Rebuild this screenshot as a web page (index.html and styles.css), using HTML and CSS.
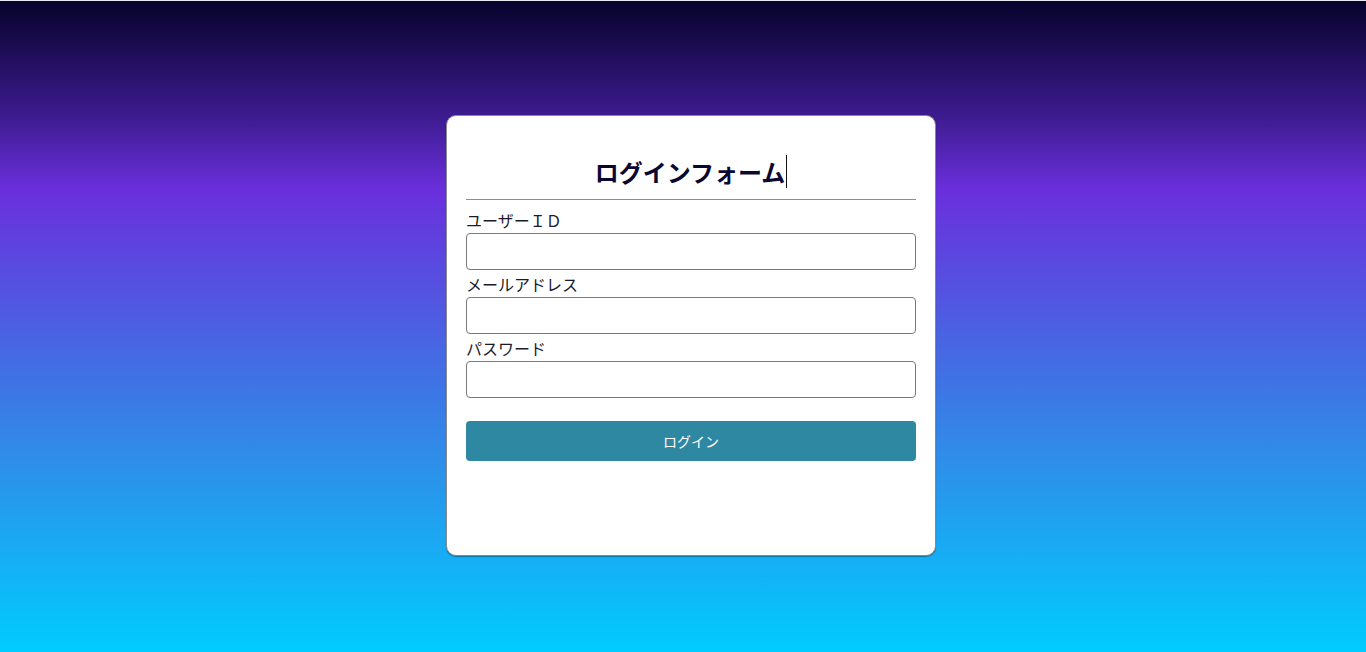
FILE: index.html
```html
<!DOCTYPE html>
<html lang="ja">
<head>
<meta charset="utf-8">
<title>ログインフォーム</title>
<link rel="stylesheet" href="styles.css">
</head>
<body>
<main class="card">
  <h1 class="title"><span class="typed">ログインフォーム</span></h1>
  <hr class="rule">
  <form class="form">
    <label class="label first" for="uid">ユーザーＩＤ</label>
    <input class="input" id="uid" type="text">
    <label class="label" for="mail">メールアドレス</label>
    <input class="input" id="mail" type="email">
    <label class="label" for="pw">パスワード</label>
    <input class="input" id="pw" type="password">
    <button class="button" type="button">ログイン</button>
  </form>
</main>
</body>
</html>
```
FILE: styles.css
```css
html, body {
  margin: 0;
  padding: 0;
}
body {
  box-sizing: border-box;
  min-height: 652px;
  border-top: 1px solid #e8e8ee;
  background: linear-gradient(to bottom, #06022a 0%, #3a1a8a 17%, #6a2fdc 29%, #2f8de8 70%, #00ccff 100%);
  display: flex;
  justify-content: center;
  align-items: flex-start;
  padding-top: 114px;
  padding-left: 16px;
  font-family: "Noto Sans CJK JP", "Noto Sans", sans-serif;
}
.card {
  box-sizing: border-box;
  width: 490px;
  height: 441px;
  background: #fff;
  border: 1px solid #8a8a8a;
  border-radius: 10px;
  box-shadow: 0 1px 1px rgba(0, 0, 0, 0.35);
  padding: 39px 19px 0;
}
.title {
  margin: 0;
  text-align: center;
  font-size: 24px;
  font-weight: 700;
  line-height: 33px;
  padding-bottom: 2px;
  color: #0b0733;
}
.typed {
  display: inline-block;
  border-right: 1px solid #111;
  padding-right: 1px;
}
.rule {
  margin: 9px 0 0;
  border: 0;
  height: 1px;
  background: #8e8e8e;
}
.form {
  display: flex;
  flex-direction: column;
}
.label {
  display: block;
  font-size: 16px;
  line-height: 21px;
  margin-top: 4px;
  margin-bottom: 2px;
  color: #1a1a2a;
}
.label.first {
  margin-top: 10px;
}
.input {
  box-sizing: border-box;
  width: 450px;
  height: 37px;
  margin: 0;
  border: 1px solid #7a7a7a;
  border-radius: 4px;
  background: #fff;
  font-size: 16px;
  padding: 0 8px;
}
.button {
  box-sizing: border-box;
  margin-top: 23px;
  width: 450px;
  height: 40px;
  border: 0;
  border-radius: 4px;
  background: #2f88a2;
  color: #fff;
  font-family: "Noto Sans CJK JP", "Noto Sans", sans-serif;
  font-size: 14px;
}
```
